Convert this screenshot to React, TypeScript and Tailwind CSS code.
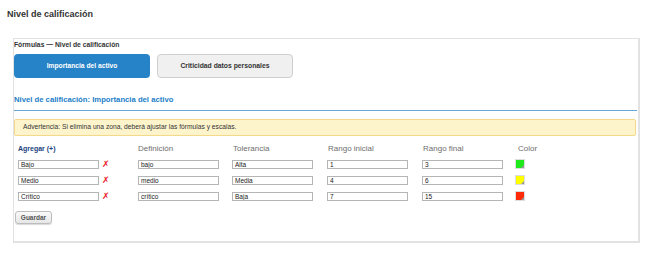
import React from "react"

const rows = [
  { name: "Bajo", def: "bajo", tol: "Alta", ini: "1", fin: "3", color: "bg-[#1ee91a]" },
  { name: "Medio", def: "medio", tol: "Media", ini: "4", fin: "6", color: "bg-[#ffff00]" },
  { name: "Crítico", def: "crítico", tol: "Baja", ini: "7", fin: "15", color: "bg-[#ff2a0a]" },
]

function Field({ value }: { value: string }) {
  return (
    <input
      defaultValue={value}
      className="block w-[81px] h-[9px] border border-[#b5b5b5] bg-white px-[2px] text-[6.5px] leading-[7px] text-[#222] outline-none"
    />
  )
}

export default function App() {
  return (
    <div className="w-[650px] h-[254px] bg-white text-[#333]" style={{ fontFamily: '"Liberation Sans", Arial, sans-serif' }}>
      <div className="px-[7px] pt-[9px] text-[9px] leading-[11px] font-bold text-[#333]">
        Nivel de calificación
      </div>

      <div className="ml-[13px] mt-[18px] w-[627px] h-[205px] border border-[#e2e2e2] border-r-2 border-b-2 pr-[1px]">
        <div className="pt-[2px] text-[6.75px] leading-[8px] font-bold text-[#333]">
          Fórmulas — Nivel de calificación
        </div>

        <div className="flex gap-[7px] mt-[5px]">
          <button className="w-[136px] h-[24px] rounded-[4px] bg-[#2783c7] text-white text-[6.7px] font-bold">
            Importancia del activo
          </button>
          <button className="w-[136px] h-[24px] rounded-[4px] bg-[#f0f0f0] border border-[#cfcfcf] text-[#333] text-[6.8px] font-bold">
            Criticidad datos personales
          </button>
        </div>

        <div className="mt-[17px] text-[7.7px] leading-[10px] font-bold text-[#1d80c8]">
          Nivel de calificación: Importancia del activo
        </div>
        <div className="mt-[5px] h-px bg-[#6aa6d4]" />

        <div className="mt-[8px] mr-[1px] h-[17px] flex items-center px-[8px] rounded-[2px] bg-[#fdf4cc] border border-[#f4d98a] text-[6.7px] text-[#333]">
          Advertencia: Si elimina una zona, deberá ajustar las fórmulas y escalas.
        </div>

        <div className="pl-[4px] mt-[8px] grid grid-cols-[120px_95px_95px_95px_92px_auto] items-center">
          <div className="h-[10px] text-[7px] leading-[10px] font-bold text-[#213f7e]">Agregar (+)</div>
          <div className="h-[10px] text-[8px] leading-[10px] text-[#6e6e6e]">Definición</div>
          <div className="h-[10px] text-[8px] leading-[10px] text-[#6e6e6e]">Tolerancia</div>
          <div className="h-[10px] text-[8px] leading-[10px] text-[#6e6e6e]">Rango inicial</div>
          <div className="h-[10px] text-[8px] leading-[10px] text-[#6e6e6e]">Rango final</div>
          <div className="h-[10px] text-[8px] leading-[10px] text-[#6e6e6e] ml-[3px]">Color</div>
        </div>

        <div className="pl-[4px] mt-[2px] flex flex-col">
          {rows.map((r) => (
            <div key={r.name} className="grid grid-cols-[120px_95px_95px_95px_92px_auto] items-center h-[16px]">
              <div className="flex items-center gap-[3px]">
                <Field value={r.name} />
                <span className="text-[9px] leading-[9px] text-[#e8232b]">✗</span>
              </div>
              <Field value={r.def} />
              <div className="-ml-[1px]"><Field value={r.tol} /></div>
              <div className="-ml-[1px]"><Field value={r.ini} /></div>
              <div className="-ml-[1px]"><Field value={r.fin} /></div>
              <div className={`relative w-[10px] h-[10px] ${r.color} border border-[#ddd]`}>
                <span className="absolute right-0 bottom-0 w-0 h-0 border-l-[3px] border-l-transparent border-b-[3px] border-b-[#999]" />
              </div>
            </div>
          ))}
        </div>

        <button className="block ml-[1px] mt-[7px] w-[37px] h-[13px] rounded-[3px] border border-[#bdbdbd] bg-gradient-to-b from-[#fafafa] to-[#e6e6e6] text-[6.5px] font-bold text-[#555] shadow-[0_1px_1px_rgba(0,0,0,0.15)]">
          Guardar
        </button>
      </div>
    </div>
  )
}
